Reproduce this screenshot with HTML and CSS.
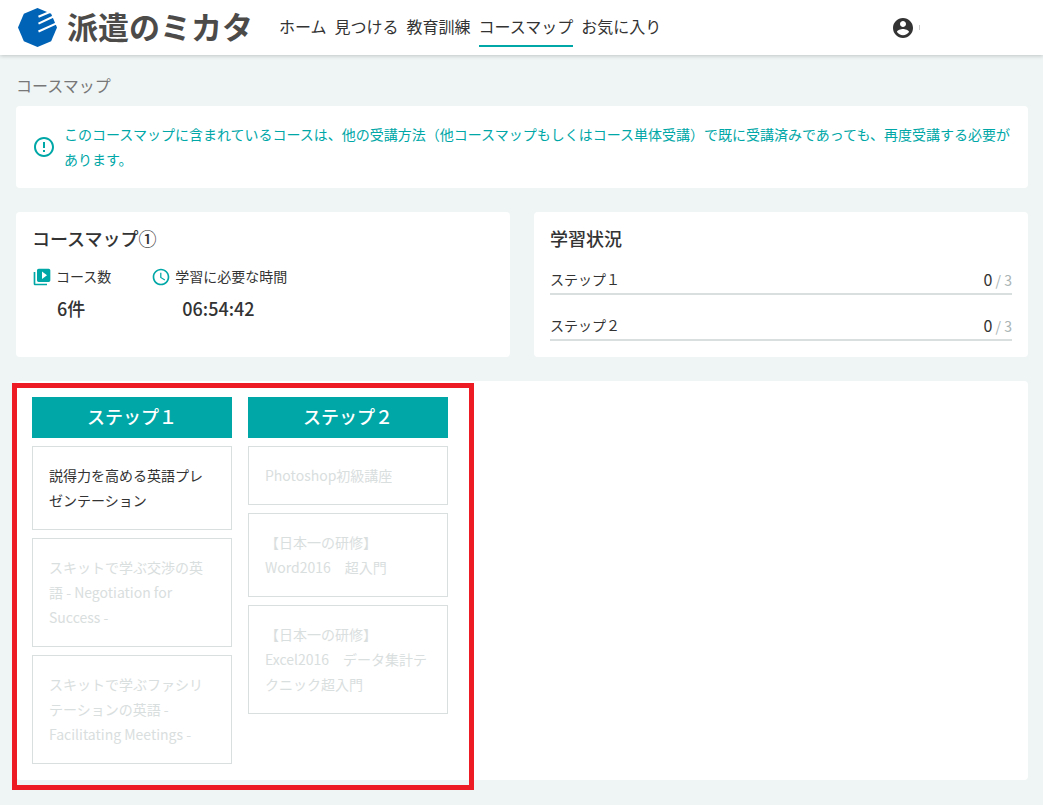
FILE: index.html
```
<!DOCTYPE html>
<html lang="ja">
<head>
    <meta charset="UTF-8">
    <meta name="viewport" content="width=device-width, initial-scale=1.0">
    <title>コースマップ | 派遣のミカタ</title>
    <link rel="stylesheet" href="styles.css">
</head>
<body>
    <!-- ヘッダー -->
    <header class="header">
        <a class="logo" href="#">
            <svg class="logo-mark" viewBox="0 0 40 40" aria-hidden="true">
                <path fill="#0063b6" d="M20 0 34 6 40 20 34 34 20 40 6 34 0 20 6 6z"/>
                <path stroke="#fff" stroke-width="2.2" d="M21 9 35 3M21 16 38 8M21 24 40 15.500"/>
            </svg>
            <span class="logo-text">派遣のミカタ</span>
        </a>
        <nav class="nav">
            <a href="#">ホーム</a>
            <a href="#">見つける</a>
            <a href="#">教育訓練</a>
            <a href="#" class="active">コースマップ</a>
            <a href="#">お気に入り</a>
        </nav>
        <button class="account" type="button" aria-label="アカウント">
            <svg viewBox="0 0 24 24" aria-hidden="true">
                <path fill="#333" d="M12 2C6.48 2 2 6.48 2 12s4.48 10 10 10 10-4.48 10-10S17.52 2 12 2zm0 3c1.66 0 3 1.34 3 3s-1.34 3-3 3-3-1.34-3-3 1.34-3 3-3zm0 14.2c-2.5 0-4.71-1.28-6-3.22.03-1.99 4-3.08 6-3.08 1.99 0 5.97 1.09 6 3.08-1.29 1.94-3.5 3.22-6 3.22z"/>
            </svg>
            <span class="account-mark"></span>
        </button>
    </header>

    <main class="main">
        <h1 class="page-title">コースマップ</h1>

        <div class="card notice">
            <svg class="icon" viewBox="0 0 24 24" aria-hidden="true">
                <path d="M11 15h2v2h-2zm0-8h2v6h-2zm.99-5C6.47 2 2 6.48 2 12s4.47 10 9.99 10C17.52 22 22 17.52 22 12S17.52 2 11.99 2zM12 20c-4.42 0-8-3.58-8-8s3.58-8 8-8 8 3.58 8 8-3.58 8-8 8z"/>
            </svg>
            <p>このコースマップに含まれているコースは、他の受講方法（他コースマップもしくはコース単体受講）で既に受講済みであっても、再度受講する必要があります。</p>
        </div>

        <div class="summary">
            <!-- コースマップ情報 -->
            <section class="card">
                <h2 class="card-title">コースマップ①</h2>
                <dl class="info">
                    <div class="info-item">
                        <dt>
                            <svg class="icon-small" viewBox="0 0 24 24" aria-hidden="true">
                                <path d="M4 6H2v14c0 1.1.9 2 2 2h14v-2H4V6zm16-4H8c-1.1 0-2 .9-2 2v12c0 1.1.9 2 2 2h12c1.1 0 2-.9 2-2V4c0-1.1-.9-2-2-2zm-8 12.500v-9l6 4.500-6 4.500z"/>
                            </svg>
                            コース数
                        </dt>
                        <dd>6件</dd>
                    </div>
                    <div class="info-item">
                        <dt>
                            <svg class="icon-small" viewBox="0 0 24 24" aria-hidden="true">
                                <path d="M11.990 2C6.470 2 2 6.480 2 12s4.470 10 9.990 10C17.520 22 22 17.520 22 12S17.520 2 11.990 2zM12 20c-4.420 0-8-3.580-8-8s3.580-8 8-8 8 3.580 8 8-3.580 8-8 8zm.5-13H11v6l5.250 3.150.75-1.230-4.500-2.670z"/>
                            </svg>
                            学習に必要な時間
                        </dt>
                        <dd>06:54:42</dd>
                    </div>
                </dl>
            </section>

            <!-- 学習状況 -->
            <section class="card">
                <h2 class="card-title">学習状況</h2>
                <ul class="progress">
                    <li><span>ステップ１</span><span class="count">0<small> / 3</small></span></li>
                    <li><span>ステップ２</span><span class="count">0<small> / 3</small></span></li>
                </ul>
            </section>
        </div>

        <!-- ステップ一覧 -->
        <section class="card">
            <div class="steps">
                <div class="step">
                    <h3>ステップ１</h3>
                    <a class="course" href="#">説得力を高める英語プレゼンテーション</a>
                    <a class="course locked">スキットで学ぶ交渉の英語 - Negotiation for Success -</a>
                    <a class="course locked">スキットで学ぶファシリテーションの英語 - Facilitating Meetings -</a>
                </div>
                <div class="step">
                    <h3>ステップ２</h3>
                    <a class="course locked">Photoshop初級講座</a>
                    <a class="course locked">【日本一の研修】Word2016　超入門</a>
                    <a class="course locked">【日本一の研修】Excel2016　データ集計テクニック超入門</a>
                </div>
                <div class="highlight"></div>
            </div>
        </section>
    </main>
</body>
</html>
```
FILE: styles.css
```
* {
    margin: 0;
    padding: 0;
    box-sizing: border-box;
}

body {
    background: #eff5f5;
    color: #333;
    font-family: "Noto Sans CJK JP", sans-serif;
    font-size: 14px;
    line-height: 25px;
}

a {
    color: inherit;
    text-decoration: none;
}

ul {
    list-style: none;
}

/* ヘッダー */
.header {
    display: flex;
    align-items: center;
    height: 55px;
    padding: 0 123px 0 18px;
    background: #fff;
    box-shadow: 0 1px 4px rgba(0, 0, 0, 0.2);
}

.logo {
    display: flex;
    align-items: flex-start;
    gap: 10px;
}

.logo-mark {
    width: 39px;
    height: 39px;
}

.logo-text {
    color: #4d4b4a;
    font-size: 31px;
    font-weight: 700;
    line-height: 35px;
    white-space: nowrap;
}

.nav {
    display: flex;
    gap: 8px;
    margin-left: 26px;
    font-size: 16px;
    white-space: nowrap;
}

.nav a {
    padding: 6px 0;
    border-bottom: 2px solid transparent;
}

.nav .active {
    border-color: #00a7a7;
}

.account {
    display: flex;
    align-items: center;
    gap: 4px;
    margin-left: auto;
    border: none;
    background: none;
    cursor: pointer;
}

.account svg {
    width: 24px;
    height: 24px;
}

.account-mark {
    width: 1px;
    height: 5px;
    background: #ccc;
}

/* メイン */
.main {
    display: flex;
    flex-direction: column;
    gap: 24px;
    padding: 18px 15px 24px 16px;
}

.page-title {
    margin-bottom: -16px;
    color: #777;
    font-size: 16px;
    font-weight: 400;
}

.card {
    padding: 16px;
    border-radius: 4px;
    background: #fff;
}

.notice {
    display: flex;
    align-items: center;
    gap: 8px;
    color: #00a7a7;
}

.icon,
.icon-small {
    flex: none;
    width: 24px;
    height: 24px;
    fill: #00a7a7;
}

.icon-small {
    width: 20px;
    height: 20px;
}

.summary {
    display: grid;
    grid-template-columns: 1fr 1fr;
    gap: 24px;
}

.card-title {
    font-size: 18px;
    font-weight: 500;
    line-height: 21px;
}

.info {
    display: flex;
    gap: 40px;
    margin-top: 15px;
}

.info dt {
    display: flex;
    align-items: center;
    gap: 4px;
}

.info dd {
    margin-top: 7px;
    font-size: 18px;
    font-weight: 500;
}

.info-item:first-child dd {
    padding-left: 25px;
}

.info-item:last-child dd {
    padding-left: 31px;
}

.progress {
    display: flex;
    flex-direction: column;
    gap: 18px;
    margin-top: 18px;
}

.progress li {
    display: flex;
    justify-content: space-between;
    height: 28px;
    border-bottom: 2px solid #d9dede;
}

.count {
    font-size: 16px;
}

.count small {
    color: #aab4b4;
    font-size: 14px;
}

/* ステップ */
.steps {
    position: relative;
    display: flex;
    align-items: flex-start;
    gap: 16px;
    width: fit-content;
}

.step {
    display: flex;
    flex-direction: column;
    gap: 8px;
    width: 200px;
}

.step h3 {
    padding: 7px 8px 9px;
    background: #00a7a7;
    color: #fff;
    font-size: 18px;
    font-weight: 500;
    text-align: center;
}

.course {
    padding: 16px;
    border: 1px solid #d9dede;
}

.locked {
    color: #d9dede;
}

.highlight {
    position: absolute;
    inset: -14px -26px -26px -20px;
    border: 5px solid #ed1c24;
    pointer-events: none;
}
```
